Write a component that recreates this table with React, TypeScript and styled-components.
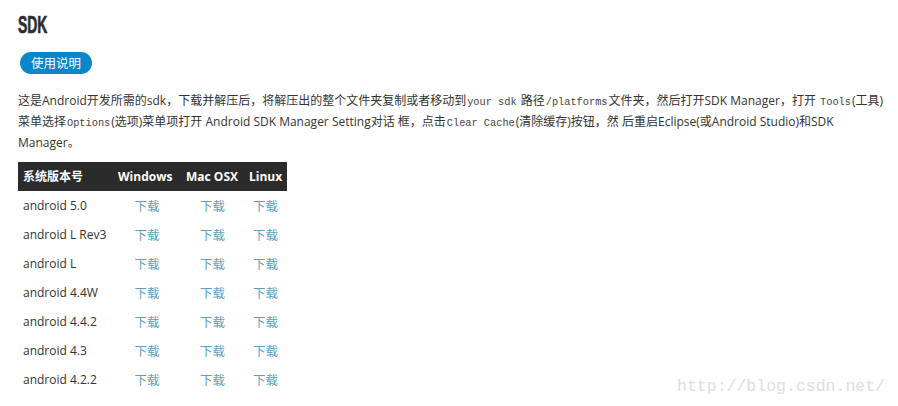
import React from "react";
import styled, { createGlobalStyle } from "styled-components";

const GlobalStyle = createGlobalStyle`
  html, body {
    margin: 0;
    padding: 0;
    background: #fff;
  }
  body {
    font-family: "Open Sans", "Noto Sans CJK SC", sans-serif;
    color: #333;
  }
`;

const Page = styled.div`
  position: relative;
  width: 898px;
  height: 406px;
  padding: 12px 0 0 18px;
  box-sizing: border-box;
  overflow: hidden;
`;

const Title = styled.h2`
  display: inline-block;
  margin: 0;
  font-family: "Liberation Sans", sans-serif;
  font-weight: 700;
  font-size: 24px;
  line-height: 25px;
  color: #2d2d2d;
  transform: scaleX(0.58);
  transform-origin: left center;
  -webkit-text-stroke: 0.7px #2d2d2d;
`;

const Bar = styled.div`
  margin-top: 13px;
`;

const Pill = styled.a`
  display: inline-flex;
  align-items: center;
  justify-content: center;
  margin-left: 2px;
  width: 72px;
  height: 22px;
  border-radius: 11px;
  background: #0a86cb;
  color: #fff;
  font-family: "Noto Sans CJK SC", sans-serif;
  font-size: 12.5px;
  text-decoration: none;
`;

const Intro = styled.p`
  margin: 17px 0 0;
  width: 875px;
  font-size: 12px;
  line-height: 19px;
  color: #333;
  white-space: nowrap;
`;

const Code = styled.code`
  font-family: "Liberation Mono", "Noto Sans CJK SC", monospace;
  font-size: 10.3px;
  color: #444;
  margin: 0 1px;
`;

const Table = styled.table`
  margin-top: 10px;
  width: 269px;
  table-layout: fixed;
  border-collapse: collapse;
  font-size: 12px;
`;

const HeadCell = styled.th<{ $w: number }>`
  width: ${(p) => p.$w}px;
  height: 29px;
  padding: 0 5px;
  box-sizing: border-box;
  background: #2b2b2b;
  color: #fff;
  font-weight: 700;
  text-align: left;
  white-space: nowrap;
  overflow: visible;
`;

const Cell = styled.td<{ $link?: boolean }>`
  height: 29px;
  padding: 0 5px;
  text-align: ${(p) => (p.$link ? "center" : "left")};
  white-space: nowrap;
  color: #333;
`;

const Dl = styled.a`
  color: #5ca2bf;
  font-family: "Noto Sans CJK SC", sans-serif;
  font-size: 12.5px;
  text-decoration: none;
`;

const Watermark = styled.div`
  position: absolute;
  right: 13px;
  bottom: 10px;
  font-family: "Liberation Mono", monospace;
  font-size: 16.5px;
  color: #dedede;
`;

const versions = [
  "android 5.0",
  "android L Rev3",
  "android L",
  "android 4.4W",
  "android 4.4.2",
  "android 4.3",
  "android 4.2.2",
];

const App = () => {
  return (
    <>
      <GlobalStyle />
      <Page>
        <Title>SDK</Title>
        <Bar>
          <Pill href="#">使用说明</Pill>
        </Bar>
        <Intro>
          这是Android开发所需的sdk，下载并解压后，将解压出的整个文件夹复制或者移动到<Code>your sdk</Code> 路径
          <Code>/platforms</Code>文件夹，然后打开SDK Manager，打开 <Code>Tools</Code>(工具)
          <br />
          菜单选择<Code>Options</Code>(选项)菜单项打开 Android SDK Manager Setting对话 框，点击
          <Code>Clear Cache</Code>(清除缓存)按钮，然 后重启Eclipse(或Android Studio)和SDK
          <br />
          Manager。
        </Intro>
        <Table>
          <thead>
            <tr>
              <HeadCell $w={95}>系统版本号</HeadCell>
              <HeadCell $w={68}>Windows</HeadCell>
              <HeadCell $w={63}>Mac OSX</HeadCell>
              <HeadCell $w={43}>Linux</HeadCell>
            </tr>
          </thead>
          <tbody>
            {versions.map((v) => (
              <tr key={v}>
                <Cell>{v}</Cell>
                <Cell $link><Dl href="#">下载</Dl></Cell>
                <Cell $link><Dl href="#">下载</Dl></Cell>
                <Cell $link><Dl href="#">下载</Dl></Cell>
              </tr>
            ))}
          </tbody>
        </Table>
        <Watermark>http://blog.csdn.net/</Watermark>
      </Page>
    </>
  );
};

export default App;
